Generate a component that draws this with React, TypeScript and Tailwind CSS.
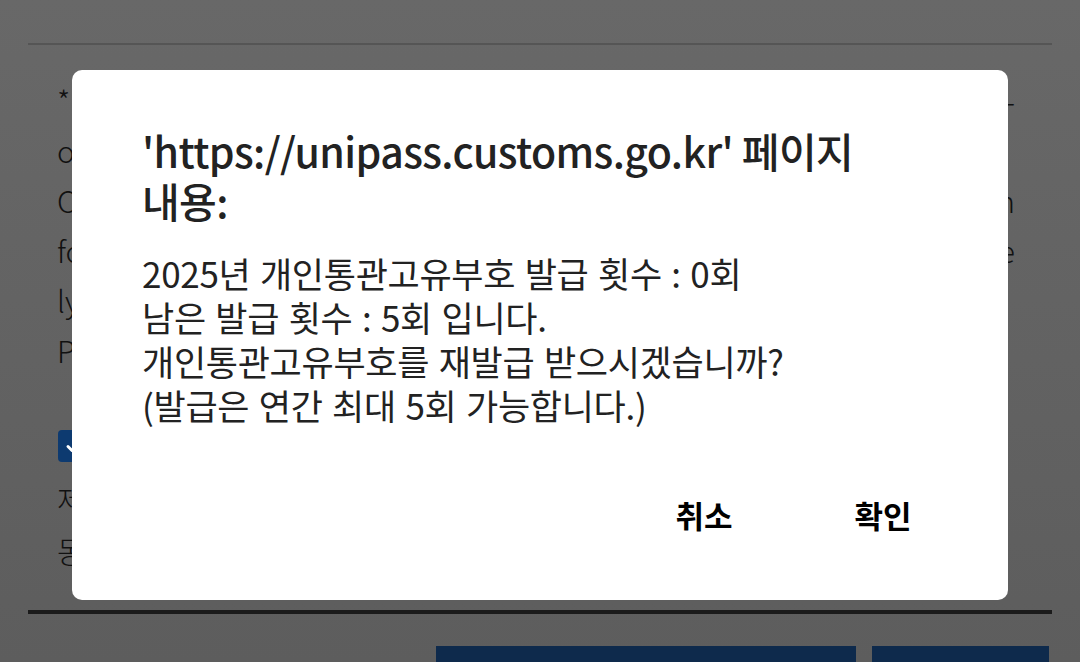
import React from "react";

const font = { fontFamily: '"Noto Sans CJK KR", "Noto Sans", sans-serif' };

export default function App() {
  const rows: [string, string][] = [
    ["*", "-"],
    ["or", ""],
    ["Cu", "n"],
    ["fo", "e"],
    ["ly", ""],
    ["Pe", ""],
  ];
  return (
    <div
      className="relative w-[1080px] h-[662px] overflow-hidden bg-gradient-to-b from-[#686868] to-[#5d5d5d] text-[#111]"
      style={font}
    >
      {/* dimmed page behind */}
      <div className="flex flex-col px-[28px] pt-[43px]">
        <div className="h-[2px] bg-[#555555]" />
        <div className="flex flex-col px-[29px] pt-[30px] text-[30px] leading-[50px] font-light">
          {rows.map(([l, r], i) => (
            <div key={i} className="flex justify-between pr-[8px]">
              <span>{l}</span>
              <span>{r}</span>
            </div>
          ))}
        </div>
        <div className="px-[30px] pt-[55px]">
          <div className="w-[32px] h-[32px] rounded-[4px] bg-[#0d3a70] flex items-center justify-center">
            <svg width="20" height="20" viewBox="0 0 20 20">
              <path d="M4 10.5l4 4 8-9" stroke="white" strokeWidth="3" fill="none" strokeLinecap="round" strokeLinejoin="round" />
            </svg>
          </div>
        </div>
        <div className="flex flex-col px-[29px] pt-[10px] text-[30px] leading-[52px] font-light">
          <span>제</span>
          <span>동</span>
        </div>
        <div className="mt-[34px] h-[4px] bg-[#1b1b1b]" />
        <div className="flex gap-[16px] pl-[408px] pr-[3px] pt-[32px]">
          <div className="h-[40px] w-[420px] bg-[#0e2a4c]" />
          <div className="h-[40px] flex-1 bg-[#0e2a4c]" />
        </div>
      </div>

      {/* dialog */}
      <div className="absolute left-[72px] top-[70px] w-[936px] h-[530px] rounded-[10px] bg-white flex flex-col pt-[55px] pl-[70px] pr-[65px]">
        <div className="text-[41px] leading-[50px] font-medium text-[#222] tracking-[-0.6px]">
          'https://unipass.customs.go.kr' 페이지
          <br />
          내용:
        </div>
        <div className="mt-[26px] text-[35px] leading-[44px] font-normal text-[#222] tracking-[-0.3px] [word-spacing:2px]">
          <div>2025년 개인통관고유부호 발급 횟수 : 0회</div>
          <div>남은 발급 횟수 : 5회 입니다.</div>
          <div>개인통관고유부호를 재발급 받으시겠습니까?</div>
          <div>(발급은 연간 최대 5회 가능합니다.)</div>
        </div>
        <div className="mt-[58px] flex justify-end gap-[59px] text-[31px] font-bold text-black">
          <div className="w-[120px] h-[60px] flex items-center justify-center">취소</div>
          <div className="w-[120px] h-[60px] flex items-center justify-center">확인</div>
        </div>
      </div>
    </div>
  );
}
